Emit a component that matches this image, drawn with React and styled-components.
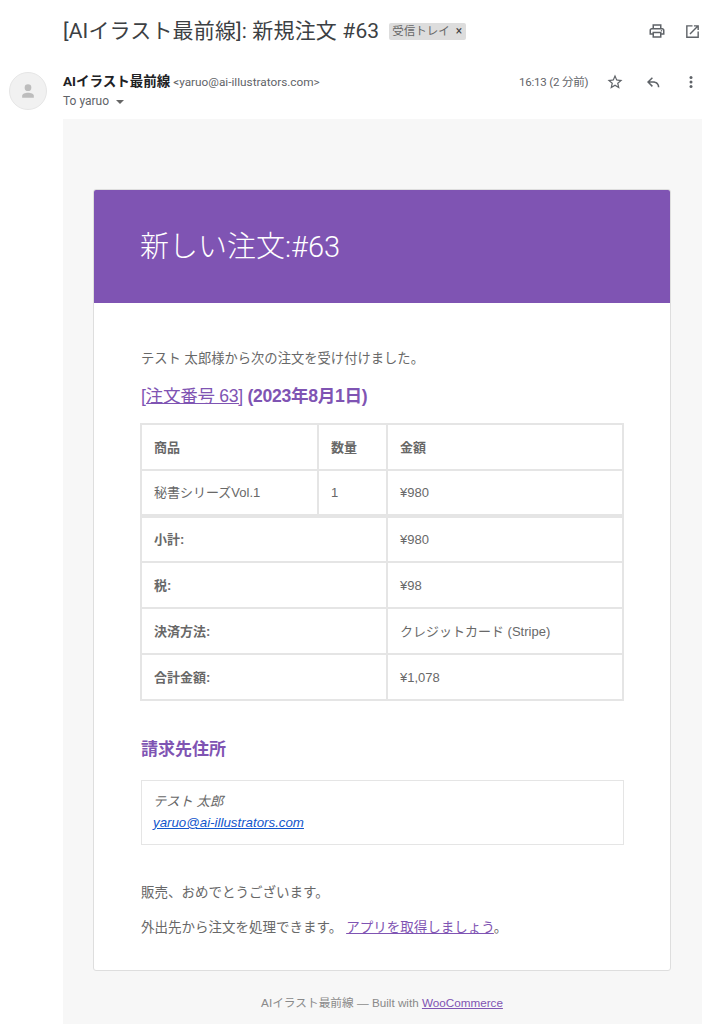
import React from "react";
import styled, { createGlobalStyle } from "styled-components";

const Global = createGlobalStyle`
  html, body { margin: 0; padding: 0; background: #fff; }
  body { font-family: "Liberation Sans", "Noto Sans CJK JP", sans-serif; overflow: hidden; }
`;
const Page = styled.div`width: 705px; height: 1024px; overflow: hidden; position: relative; background: #fff;`;
const SubjectRow = styled.div`display: flex; align-items: center; height: 62px; padding: 0 4px 0 63px; box-sizing: border-box;`;
const Subject = styled.h1`margin: 0; font: 400 21px/24px Roboto, "Noto Sans CJK JP", sans-serif; letter-spacing: 0.15px; color: #3c4043; white-space: nowrap;`;
const Chip = styled.span`display: inline-flex; align-items: center; gap: 6px; margin-left: 10px; height: 17px; padding: 0 4px 0 3px; background: #ddd; border-radius: 2px; font: 400 11.5px/17px Roboto, "Noto Sans CJK JP", sans-serif; color: #666; white-space: nowrap;`;
const ChipClose = styled.span`font-size: 12px; color: #444;`;
const TopIcons = styled.div`margin-left: auto; display: flex; gap: 18px; align-items: center;`;
const IconSvg = styled.svg`display: block; fill: ${p => p.$fill || "none"};`;
const SenderRow = styled.div`display: flex; height: 57px; padding: 0 0 0 9px; box-sizing: border-box;`;
const Avatar = styled.div`width: 38px; height: 38px; margin-top: 10px; border-radius: 50%; background: #f1f1f1; border: 1px solid #e6e6e6; box-sizing: border-box; display: flex; align-items: center; justify-content: center;`;
const SenderInfo = styled.div`margin-left: 16px; padding-top: 10px; width: 456px;`;
const SenderLine = styled.div`font: 400 11.8px/18px Roboto, "Noto Sans CJK JP", sans-serif; color: #5f6368; white-space: nowrap;`;
const SenderName = styled.b`font-weight: 700; font-size: 13.5px; color: #202124;`;
const ToLine = styled.div`display: flex; align-items: center; gap: 7px; margin-top: 2px; font: 400 12px/17px Roboto, sans-serif; color: #5f6368;`;
const Caret = styled.span`width: 0; height: 0; border: 4px solid transparent; border-top-color: #666; border-bottom-width: 0;`;
const Meta = styled.div`display: flex; align-items: center; height: 20px; margin-top: 10px;`;
const Time = styled.span`font: 400 11.5px/20px Roboto, "Noto Sans CJK JP", sans-serif; color: #5f6368; white-space: nowrap; letter-spacing: -0.2px; width: 87px;`;
const MetaIcons = styled.div`display: flex; align-items: center; gap: 20px;`;
const Mail = styled.div`margin-left: 63px; width: 639px; height: 905px; background: #f7f7f7; padding: 70px 31px 0 30px; box-sizing: border-box;`;
const Card = styled.div`width: 578px; height: 782px; background: #fff; border: 1px solid #dedede; border-radius: 3px; box-sizing: border-box; overflow: hidden;`;
const Banner = styled.div`height: 113px; background: #7f54b3; padding: 0 46px 0 46px; display: flex; align-items: center; color: #fff; font: 300 29px/36px Roboto, "Noto Sans CJK JP", sans-serif;`;
const Body = styled.div`padding: 46px 46px 0 47px; color: #686868; font: 400 13.3px/20px "Liberation Sans", "Noto Sans CJK JP", sans-serif;`;
const Para = styled.p`margin: 0 0 ${p => p.$mb || 15}px; white-space: nowrap;`;
const OrderTitle = styled.h2`margin: 0 0 16px; font: 700 17.6px/22px "Liberation Sans", "Noto Sans CJK JP", sans-serif; color: #7f54b3; letter-spacing: -0.3px;`;
const PlainLink = styled.a`font-weight: 400; color: #7f54b3; text-decoration: underline;`;
const Table = styled.table`width: 482px; margin-left: -1px; border-collapse: collapse; table-layout: fixed; border: 2px solid #e5e5e5;`;
const Col = styled.col`width: ${p => p.$w}px;`;
const Cell = styled.td`height: 46px; padding: 1px 12px 0; box-sizing: border-box; border: 2px solid #e5e5e5; border-top-width: ${p => p.$thick ? 4 : 2}px; font-weight: ${p => p.$bold ? 700 : 400}; color: #686868; font-size: 13px; text-align: left;`;
const AddressTitle = styled.h2`margin: 36px 0 17px; font: 700 17px/26px "Liberation Sans", "Noto Sans CJK JP", sans-serif; color: #7f54b3;`;
const Address = styled.address`height: 65px; box-sizing: border-box; border: 1px solid #e5e5e5; padding: 10px 11px; font-style: italic; font-size: 13.3px; line-height: 21px;`;
const MailLink = styled.a`color: #1155cc; text-decoration: underline;`;
const Closing = styled.div`margin-top: 38px; font-size: 13.5px;`;
const AppLink = styled.a`color: #7f54b3; text-decoration: underline; margin-left: 4px;`;
const Footer = styled.div`margin-top: 25px; text-align: center; font: 400 11.7px/14px "Liberation Sans", "Noto Sans CJK JP", sans-serif; color: #8a8a8a;`;
const FooterLink = styled.a`color: #7f54b3; text-decoration: underline;`;

const Print = () => (
  <IconSvg width="18" height="18" viewBox="0 0 24 24" $fill="#5f6368"><path d="M19 8h-1V3H6v5H5c-1.66 0-3 1.34-3 3v6h4v4h12v-4h4v-6c0-1.66-1.34-3-3-3zM8 5h8v3H8V5zm8 14H8v-4h8v4zm2-4v-2H6v2H4v-4c0-.55.45-1 1-1h14c.55 0 1 .45 1 1v4h-2z" /><circle cx="18" cy="11.5" r="1" /></IconSvg>
);
const OpenNew = () => (
  <IconSvg width="17" height="17" viewBox="0 0 24 24" $fill="#5f6368"><path d="M19 19H5V5h7V3H3v18h18v-9h-2v7zM14 3v2h3.59l-9.83 9.83 1.41 1.41L19 6.41V10h2V3h-7z" /></IconSvg>
);
const Star = () => (
  <IconSvg width="18" height="18" viewBox="0 0 24 24" $fill="#5f6368"><path d="M22 9.24l-7.19-.62L12 2 9.19 8.63 2 9.24l5.46 4.73L5.82 21 12 17.27 18.18 21l-1.63-7.03L22 9.24zM12 15.4l-3.76 2.27 1-4.28-3.32-2.88 4.38-.38L12 6.1l1.71 4.04 4.38.38-3.32 2.88 1 4.28L12 15.4z" /></IconSvg>
);
const Reply = () => (
  <IconSvg width="18" height="18" viewBox="0 0 24 24" $fill="#5f6368"><path d="M10.5 5.5L4 12l6.5 6.5 1.4-1.4L7.8 13H12c4 0 6.5 2 6.5 6h2c0-5.2-3.6-8-8.5-8H7.8l4.1-4.1z" /></IconSvg>
);
const More = () => (
  <IconSvg width="18" height="18" viewBox="0 0 24 24" $fill="#5f6368"><circle cx="12" cy="6" r="2" /><circle cx="12" cy="12" r="2" /><circle cx="12" cy="18" r="2" /></IconSvg>
);
const Person = () => (
  <IconSvg width="20" height="20" viewBox="0 0 24 24" $fill="#bdbdbd"><circle cx="12" cy="8" r="4" /><path d="M12 14c-3.5 0-7 1.4-7 3.6V20h14v-2.4c0-2.2-3.5-3.6-7-3.6z" /></IconSvg>
);

export default function App() {
  return (
    <Page>
      <Global />
      <SubjectRow>
        <Subject>[AIイラスト最前線]: 新規注文 #63</Subject>
        <Chip>受信トレイ<ChipClose>×</ChipClose></Chip>
        <TopIcons><Print /><OpenNew /></TopIcons>
      </SubjectRow>
      <SenderRow>
        <Avatar><Person /></Avatar>
        <SenderInfo>
          <SenderLine><SenderName>AIイラスト最前線</SenderName> &lt;yaruo@ai-illustrators.com&gt;</SenderLine>
          <ToLine>To yaruo <Caret /></ToLine>
        </SenderInfo>
        <Meta>
          <Time>16:13 (2 分前)</Time>
          <MetaIcons><Star /><Reply /><More /></MetaIcons>
        </Meta>
      </SenderRow>
      <Mail>
        <Card>
          <Banner>新しい注文:#63</Banner>
          <Body>
            <Para $mb={16}>テスト 太郎様から次の注文を受け付けました。</Para>
            <OrderTitle><PlainLink href="#">[注文番号 63]</PlainLink> (2023年8月1日)</OrderTitle>
            <Table>
              <colgroup><Col $w={177} /><Col $w={69} /><Col $w={236} /></colgroup>
              <tbody>
                <tr><Cell as="th" $bold>商品</Cell><Cell as="th" $bold>数量</Cell><Cell as="th" $bold>金額</Cell></tr>
                <tr><Cell>秘書シリーズVol.1</Cell><Cell>1</Cell><Cell>¥980</Cell></tr>
                <tr><Cell as="th" colSpan={2} $bold $thick>小計:</Cell><Cell $thick>¥980</Cell></tr>
                <tr><Cell as="th" colSpan={2} $bold>税:</Cell><Cell>¥98</Cell></tr>
                <tr><Cell as="th" colSpan={2} $bold>決済方法:</Cell><Cell>クレジットカード (Stripe)</Cell></tr>
                <tr><Cell as="th" colSpan={2} $bold>合計金額:</Cell><Cell>¥1,078</Cell></tr>
              </tbody>
            </Table>
            <AddressTitle>請求先住所</AddressTitle>
            <Address>テスト 太郎<br /><MailLink href="#">yaruo@ai-illustrators.com</MailLink></Address>
            <Closing>
              <Para>販売、おめでとうございます。</Para>
              <Para>外出先から注文を処理できます。<AppLink href="#">アプリを取得しましょう</AppLink>。</Para>
            </Closing>
          </Body>
        </Card>
        <Footer>AIイラスト最前線 — Built with <FooterLink href="#">WooCommerce</FooterLink></Footer>
      </Mail>
    </Page>
  );
}
